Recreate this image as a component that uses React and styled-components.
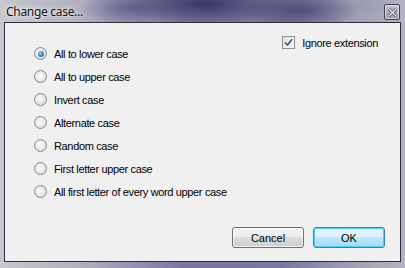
import React from "react";
import styled, { createGlobalStyle } from "styled-components";

const GlobalStyle = createGlobalStyle`
  html, body { margin: 0; padding: 0; }
  body { width: 405px; height: 268px; overflow: hidden; }
`;

const options = [
  "All to lower case",
  "All to upper case",
  "Invert case",
  "Alternate case",
  "Random case",
  "First letter upper case",
  "All first letter of every word upper case",
];

const App = () => {
  return (
    <>
      <GlobalStyle />
      <Window>
        <TitleBar>
          <Title>Change case...</Title>
          <CloseButton>
            <svg width="9" height="9" viewBox="0 0 9 9">
              <path d="M1 1 L8 8 M8 1 L1 8" stroke="#2a2a2a" strokeWidth="2.6" />
              <path d="M1 1 L8 8 M8 1 L1 8" stroke="#fff" strokeWidth="1.4" />
            </svg>
          </CloseButton>
        </TitleBar>
        <Client>
          <Top>
            <RadioList>
              {options.map((label, i) => (
                <Option key={label}>
                  <Radio $checked={i === 0} />
                  <span>{label}</span>
                </Option>
              ))}
            </RadioList>
            <CheckRow>
              <CheckBox>
                <svg width="9" height="9" viewBox="0 0 9 9">
                  <path d="M1 4.5 L3.5 7 L8 1.2" stroke="#3b4f8c" strokeWidth="1.6" fill="none" />
                </svg>
              </CheckBox>
              <span>Ignore extension</span>
            </CheckRow>
          </Top>
          <Buttons>
            <Button>Cancel</Button>
            <Button $default>OK</Button>
          </Buttons>
        </Client>
      </Window>
    </>
  );
};

const Window = styled.div`
  width: 405px;
  height: 268px;
  display: flex;
  flex-direction: column;
  box-sizing: border-box;
  background:
    radial-gradient(ellipse 80px 22px at 205px 4px, rgba(50, 46, 96, 0.9), transparent),
    radial-gradient(ellipse 60px 20px at 300px 10px, rgba(62, 58, 105, 0.75), transparent),
    radial-gradient(ellipse 50px 18px at 130px 8px, rgba(80, 76, 122, 0.7), transparent),
    radial-gradient(ellipse 40px 18px at 360px 6px, rgba(150, 150, 170, 0.6), transparent),
    linear-gradient(90deg, #c8c8ce 0%, #b0b0c0 20%, #7a76a0 45%, #7a789e 70%, #a2a2b6 88%, #b4b4c2 100%);
  padding: 0 4px 6px 4px;
`;

const TitleBar = styled.div`
  height: 22px;
  display: flex;
  align-items: flex-start;
  justify-content: space-between;
`;

const Title = styled.div`
  font-family: "Noto Sans", "Open Sans", sans-serif;
  font-size: 12px;
  letter-spacing: -0.3px;
  color: #111;
  padding: 4px 0 0 2px;
  line-height: 15px;
  text-shadow: 0 0 6px rgba(255, 255, 255, 0.9), 0 0 3px rgba(255, 255, 255, 0.9);
`;

const CloseButton = styled.div`
  width: 16px;
  height: 16px;
  margin: 4px 1px 0 0;
  border: 1px solid #3e3e4c;
  border-radius: 2px;
  box-sizing: border-box;
  background: linear-gradient(#c4c4d2, #9a9ab2);
  box-shadow: inset 0 0 0 1px rgba(255, 255, 255, 0.55);
  display: flex;
  align-items: center;
  justify-content: center;
`;

const Client = styled.div`
  flex: 1;
  background: #f0f0f0;
  border: 1px solid #2e2e36;
  display: flex;
  flex-direction: column;
  font-family: "Liberation Sans", Arial, sans-serif;
  font-size: 11px;
  letter-spacing: -0.35px;
  color: #000;
`;

const Top = styled.div`
  flex: 1;
  display: flex;
  justify-content: space-between;
  padding: 13px 22px 0 29px;
`;

const RadioList = styled.div`
  display: flex;
  flex-direction: column;
  gap: 10px;
  padding-top: 11px;
`;

const Option = styled.label`
  display: flex;
  align-items: center;
  gap: 7px;
  height: 13px;
`;

const Radio = styled.span`
  width: 13px;
  height: 13px;
  border-radius: 50%;
  box-sizing: border-box;
  border: 1px solid #8a8a8a;
  background: radial-gradient(circle at 45% 45%, #f6f6f6 20%, #d4d4d4 90%);
  display: flex;
  align-items: center;
  justify-content: center;
  &::after {
    content: "";
    display: ${(p) => (p.$checked ? "block" : "none")};
    width: 6px;
    height: 6px;
    border-radius: 50%;
    background: radial-gradient(circle at 40% 35%, #8ad8f8, #1f78b8 65%, #0e4a82);
  }
`;

const CheckRow = styled.label`
  display: flex;
  align-items: center;
  gap: 7px;
  height: 13px;
`;

const CheckBox = styled.span`
  width: 13px;
  height: 13px;
  box-sizing: border-box;
  border: 1px solid #8f8f8f;
  background: linear-gradient(135deg, #e0e0e0, #fafafa);
  display: flex;
  align-items: center;
  justify-content: center;
`;

const Buttons = styled.div`
  display: flex;
  justify-content: flex-end;
  gap: 9px;
  padding: 0 15px 13px 0;
`;

const Button = styled.button`
  width: 72px;
  height: 21px;
  box-sizing: border-box;
  font-family: "Liberation Sans", Arial, sans-serif;
  font-size: 11px;
  color: #000;
  border-radius: 3px;
  border: 1px solid ${(p) => (p.$default ? "#3c7fb1" : "#707070")};
  background: ${(p) =>
    p.$default
      ? "linear-gradient(#eaf6fd 0%, #d9f0fc 50%, #bee6fd 50%, #a7d9f5 100%)"
      : "linear-gradient(#f2f2f2 0%, #ebebeb 50%, #dddddd 50%, #cfcfcf 100%)"};
  box-shadow: inset 0 0 0 1px ${(p) => (p.$default ? "#48d3fa" : "rgba(255,255,255,0.7)")};
  padding: 0;
`;

export default App;
